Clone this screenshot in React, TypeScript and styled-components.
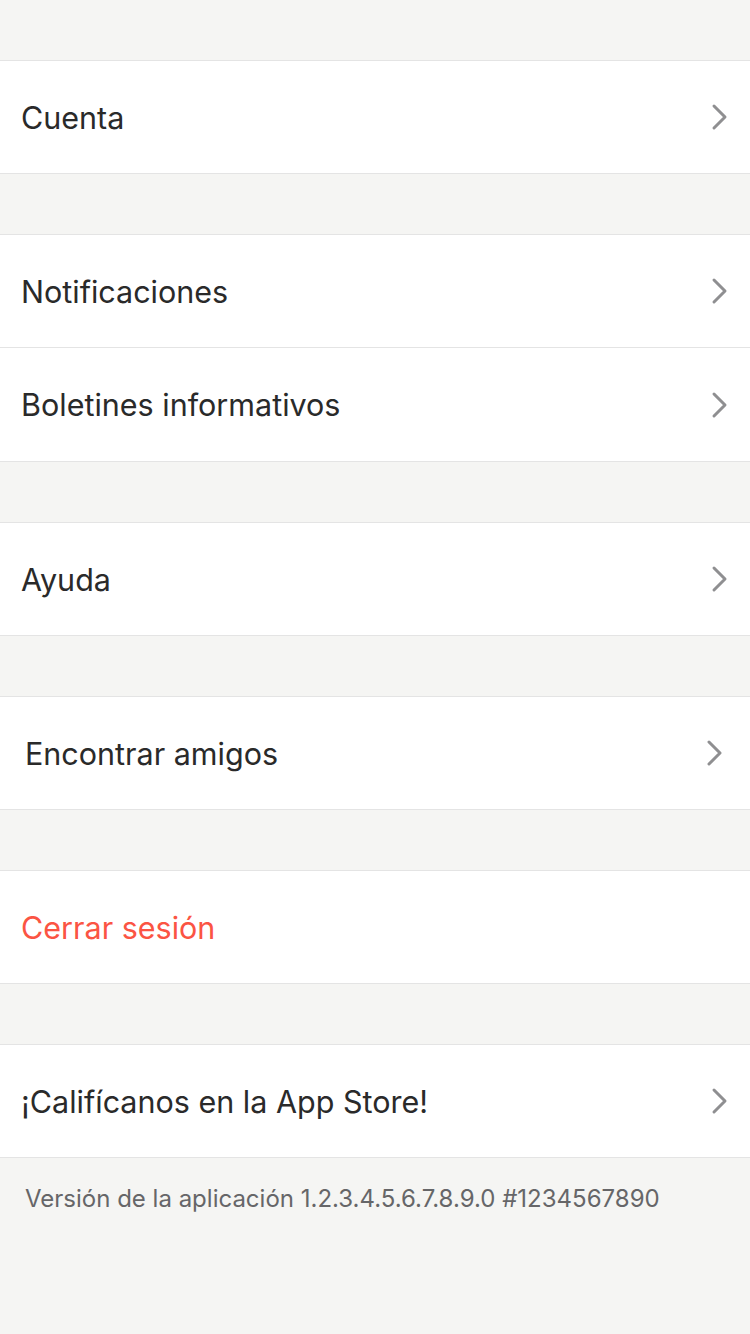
import styled, { createGlobalStyle } from 'styled-components';

type Item = {
    label: string;
    danger?: boolean;
    chevron?: boolean;
    indent?: boolean;
};

const groups: Item[][] = [
    [{ label: 'Cuenta', chevron: true }],
    [
        { label: 'Notificaciones', chevron: true },
        { label: 'Boletines informativos', chevron: true },
    ],
    [{ label: 'Ayuda', chevron: true }],
    [{ label: 'Encontrar amigos', chevron: true, indent: true }],
    [{ label: 'Cerrar sesión', danger: true }],
    [{ label: '¡Califícanos en la App Store!', chevron: true }],
];

const Chevron = () => (
    <svg width="18" height="28" viewBox="0 0 18 28" fill="none">
        <path
            d="M3 3 L14 14 L3 25"
            stroke="#8f8f91"
            strokeWidth="3"
            strokeLinecap="round"
            strokeLinejoin="round"
        />
    </svg>
);

export default function App() {
    return (
        <>
            <GlobalStyle />
            <Page>
                {groups.map((g, i) => (
                    <Group key={i}>
                        {g.map((item) => (
                            <Row key={item.label} $indent={item.indent}>
                                <Label $danger={item.danger}>{item.label}</Label>
                                {item.chevron && <Chevron />}
                            </Row>
                        ))}
                    </Group>
                ))}
                <Version>Versión de la aplicación 1.2.3.4.5.6.7.8.9.0 #1234567890</Version>
            </Page>
        </>
    );
}

const GlobalStyle = createGlobalStyle`
    body {
        margin: 0;
        background: #f5f5f3;
        font-family: Inter, "Noto Sans", sans-serif;
    }
`;

const Page = styled.div`
    display: flex;
    flex-direction: column;
    row-gap: 60px;
    padding-top: 60px;
    min-height: 1334px;
    box-sizing: border-box;
    background: #f5f5f3;
`;

const Row = styled.div<{ $indent?: boolean }>`
    height: 112px;
    display: flex;
    align-items: center;
    justify-content: space-between;
    padding: 0 ${(p) => (p.$indent ? 26 : 21)}px 0 ${(p) => (p.$indent ? 25 : 21)}px;

    svg {
        flex-shrink: 0;
    }
`;

const Group = styled.div`
    display: flex;
    flex-direction: column;
    background: #fff;
    border-top: 1px solid #e4e4e4;
    border-bottom: 1px solid #e4e4e4;

    & > ${Row} + ${Row} {
        height: 113px;
        border-top: 1px solid #e4e4e4;
    }
`;

const Label = styled.span<{ $danger?: boolean }>`
    font-size: 30.5px;
    color: ${(p) => (p.$danger ? '#fb5443' : '#2a2a2a')};
`;

const Version = styled.div`
    margin-top: -34px;
    padding-left: 25px;
    font-size: 24px;
    color: #666668;
`;
